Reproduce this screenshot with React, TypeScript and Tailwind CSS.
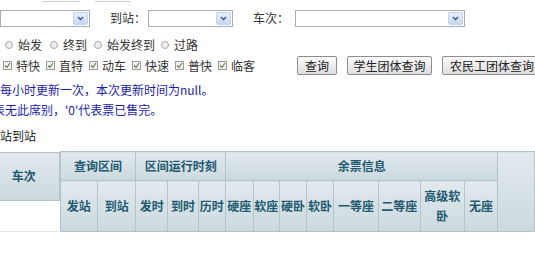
import React from 'react';

const font = { fontFamily: '"Noto Sans CJK SC", "DejaVu Sans", sans-serif' };

const FakeSelect: React.FC<{ className: string }> = ({ className }) => (
  <div className={`flex h-[17px] items-center justify-end border border-[#a5acb5] bg-white pr-[1px] ${className}`}>
    <div className="flex h-[13px] w-[15px] items-center justify-center rounded-[2px] border border-[#c3d3ec] bg-gradient-to-b from-[#e6eefc] to-[#c7d7f3]">
      <svg width="7" height="5" viewBox="0 0 7 5">
        <path d="M1 1 L3.5 3.5 L6 1" fill="none" stroke="#4d6185" strokeWidth="1.6" />
      </svg>
    </div>
  </div>
);

const Radio: React.FC<{ label: string; className: string }> = ({ label, className }) => (
  <label className={`flex shrink-0 items-center gap-[5px] whitespace-nowrap text-[#333] ${className}`}>
    <span className="h-[8px] w-[8px] rounded-full border border-[#a9a9a9] bg-[#eeeeee]" />
    {label}
  </label>
);

const Check: React.FC<{ label: string }> = ({ label }) => (
  <label className="flex w-[43px] shrink-0 items-center gap-[4px] whitespace-nowrap text-[#333]">
    <span className="flex h-[9px] w-[9px] items-center justify-center border border-[#9a9a9a] bg-[#f2f2f2]">
      <svg width="7" height="7" viewBox="0 0 7 7">
        <path d="M1 3.5 L3 5.5 L6 1" fill="none" stroke="#5a7a3a" strokeWidth="1.1" />
      </svg>
    </span>
    {label}
  </label>
);

const Btn: React.FC<{ label: string; className?: string }> = ({ label, className = '' }) => (
  <button className={`h-[19px] shrink-0 whitespace-nowrap rounded-[2px] border border-[#8d8d8d] bg-gradient-to-b from-[#fbfbfb] to-[#dedede] p-0 text-center text-[12px] leading-none text-[#222] ${className}`}>
    {label}
  </button>
);

const th = 'border border-[#b3c4cc] bg-gradient-to-b from-[#e2eaed] to-[#cbd9de] p-0 text-center align-middle text-[12px] font-bold text-[#215a70]';

export default function App() {
  const seats = ['硬座', '软座', '硬卧', '软卧', '一等座', '二等座'];
  return (
    <div className="h-[255px] w-[535px] overflow-hidden bg-white text-[12px] text-[#333]" style={font}>
      <div className="flex h-[9px]">
        <div className="ml-[42px] mt-[1px] h-[1px] w-[38px] bg-[#c8ccd4]" />
        <div className="ml-[15px] mt-[1px] h-[1px] w-[35px] bg-[#c8ccd4]" />
      </div>
      <div className="flex items-center whitespace-nowrap">
        <FakeSelect className="w-[90px] shrink-0" />
        <span className="ml-[20px] w-[38px] shrink-0">到站：</span>
        <FakeSelect className="w-[85px] shrink-0" />
        <span className="ml-[20px] w-[42px] shrink-0">车次：</span>
        <FakeSelect className="w-[170px] shrink-0" />
      </div>
      <div className="mt-[10px] flex h-[16px] items-center pl-[5px]">
        <Radio label="始发" className="w-[45px]" />
        <Radio label="终到" className="w-[44px]" />
        <Radio label="始发终到" className="w-[67px]" />
        <Radio label="过路" className="w-[40px]" />
      </div>
      <div className="mt-[3px] flex h-[19px] items-center pl-[3px]">
        <div className="flex w-[294px] shrink-0 items-center">
          <Check label="特快" />
          <Check label="直特" />
          <Check label="动车" />
          <Check label="快速" />
          <Check label="普快" />
          <Check label="临客" />
        </div>
        <div className="flex gap-[10px]">
          <Btn label="查询" className="w-[40px]" />
          <Btn label="学生团体查询" className="w-[85px]" />
          <Btn label="农民工团体查询" className="w-[100px]" />
        </div>
      </div>
      <div className="mt-[5px] whitespace-nowrap leading-[20px] text-[#1c1ca8]">
        <div>每小时更新一次，本次更新时间为null。</div>
        <div className="-ml-[7px]">表无此席别，'0'代表票已售完。</div>
      </div>
      <div className="mt-[9px] leading-[14px] text-[#222]">站到站</div>
      <table className="-ml-[12px] mt-[8px] table-fixed border-collapse">
        <colgroup>
          <col className="w-[78px]" />
          <col className="w-[40px]" />
          <col className="w-[41px]" />
          <col className="w-[34px]" />
          <col className="w-[32px]" />
          <col className="w-[29px]" />
          <col className="w-[29px]" />
          <col className="w-[28px]" />
          <col className="w-[28px]" />
          <col className="w-[29px]" />
          <col className="w-[48px]" />
          <col className="w-[45px]" />
          <col className="w-[47px]" />
          <col className="w-[36px]" />
          <col className="w-[40px]" />
        </colgroup>
        <thead>
          <tr>
            <th rowSpan={2} className="h-[80px] border-b border-[#dfe5e8] p-0 align-top">
              <div className="flex h-[49px] items-center justify-center border border-[#b3c4cc] bg-gradient-to-b from-[#e2eaed] to-[#cbd9de] text-[12px] font-bold text-[#215a70]">
                车次
              </div>
            </th>
            <th colSpan={2} className={`${th} h-[29px]`}>查询区间</th>
            <th colSpan={3} className={`${th} h-[29px]`}>区间运行时刻</th>
            <th colSpan={8} className={`${th} h-[29px]`}>余票信息</th>
            <th rowSpan={2} className={th}></th>
          </tr>
          <tr>
            <th className={`${th} h-[51px]`}>发站</th>
            <th className={th}>到站</th>
            <th className={th}>发时</th>
            <th className={th}>到时</th>
            <th className={th}>历时</th>
            {seats.map((s) => (
              <th key={s} className={th}>
                {s}
              </th>
            ))}
            <th className={`${th} leading-[20px]`}>
              高级软
              <br />
              卧
            </th>
            <th className={th}>无座</th>
          </tr>
        </thead>
      </table>
    </div>
  );
}
